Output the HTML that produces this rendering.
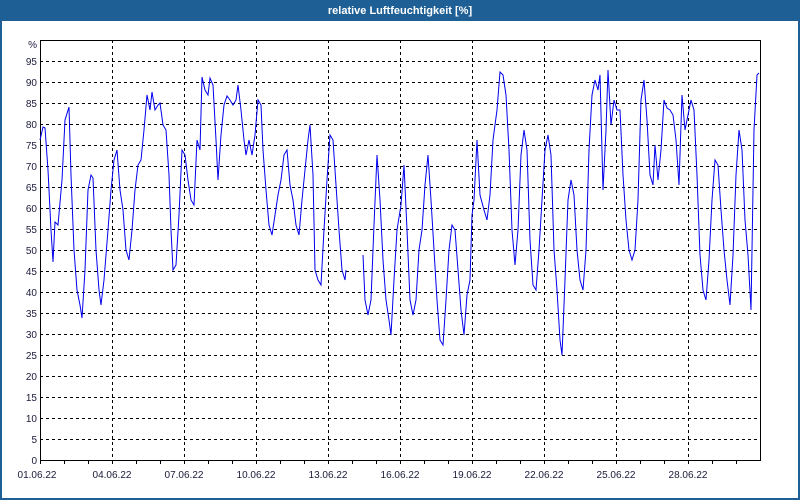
<!DOCTYPE html>
<html><head><meta charset="utf-8"><style>
html,body{margin:0;padding:0;width:800px;height:500px;overflow:hidden;background:#fff;font-family:"Liberation Sans",sans-serif}
</style></head><body>
<svg width="800" height="500" xmlns="http://www.w3.org/2000/svg" style="position:absolute;left:0;top:0">
<rect x="0" y="0" width="800" height="500" fill="#1e5f96"/>
<rect x="2" y="21" width="796" height="477" fill="#fff"/>
<text x="400" y="14" fill="#fff" font-size="11" font-weight="bold" text-anchor="middle" font-family="Liberation Sans, sans-serif">relative Luftfeuchtigkeit [%]</text>
<g stroke="#000" stroke-dasharray="3,3" stroke-width="1" shape-rendering="crispEdges">
<path d="M40 61.5H760M40 82.5H760M40 103.5H760M40 124.5H760M40 145.5H760M40 166.5H760M40 187.5H760M40 208.5H760M40 229.5H760M40 250.5H760M40 271.5H760M40 292.5H760M40 313.5H760M40 334.5H760M40 355.5H760M40 376.5H760M40 397.5H760M40 418.5H760M40 439.5H760"/>
<path d="M112.5 40V460M184.5 40V460M256.5 40V460M328.5 40V460M400.5 40V460M472.5 40V460M544.5 40V460M616.5 40V460M688.5 40V460"/>
</g>
<g stroke="#000" stroke-width="1" fill="none" shape-rendering="crispEdges">
<rect x="40.5" y="40.5" width="720" height="420"/>
<path d="M40.5 460V464M64.5 460V464M88.5 460V464M112.5 460V464M136.5 460V464M160.5 460V464M184.5 460V464M208.5 460V464M232.5 460V464M256.5 460V464M280.5 460V464M304.5 460V464M328.5 460V464M352.5 460V464M376.5 460V464M400.5 460V464M424.5 460V464M448.5 460V464M472.5 460V464M496.5 460V464M520.5 460V464M544.5 460V464M568.5 460V464M592.5 460V464M616.5 460V464M640.5 460V464M664.5 460V464M688.5 460V464M712.5 460V464M736.5 460V464"/>
</g>
<g font-size="10" fill="#1a1a3a" text-anchor="end" font-family="Liberation Sans, sans-serif">
<text x="37" y="48">%</text><text x="37" y="65">95</text><text x="37" y="86">90</text><text x="37" y="107">85</text><text x="37" y="128">80</text><text x="37" y="149">75</text><text x="37" y="170">70</text><text x="37" y="191">65</text><text x="37" y="212">60</text><text x="37" y="233">55</text><text x="37" y="254">50</text><text x="37" y="275">45</text><text x="37" y="296">40</text><text x="37" y="317">35</text><text x="37" y="338">30</text><text x="37" y="359">25</text><text x="37" y="380">20</text><text x="37" y="401">15</text><text x="37" y="422">10</text><text x="37" y="443">5</text><text x="37" y="464">0</text>
</g>
<g font-size="10" fill="#1a1a3a" text-anchor="middle" font-family="Liberation Sans, sans-serif">
<text x="37" y="478">01.06.22</text><text x="112" y="478">04.06.22</text><text x="184" y="478">07.06.22</text><text x="256" y="478">10.06.22</text><text x="328" y="478">13.06.22</text><text x="400" y="478">16.06.22</text><text x="472" y="478">19.06.22</text><text x="544" y="478">22.06.22</text><text x="616" y="478">25.06.22</text><text x="688" y="478">28.06.22</text>
</g>
<g stroke="#0000ee" stroke-width="1" fill="none">
<polyline points="40,140 43,127 45,128 48,170 51,230 53,262 55,222 58,225 62,180 65,120 69,107 71,175 74,250 77,290 80,305 82,318 85,270 88,190 91,175 93,178 96,250 99,290 101,305 104,280 108,230 111,190 114,160 117,150 120,190 123,210 126,250 129,260 132,230 135,190 138,165 141,160 144,130 147,95 150,110 152,92 155,110 158,105 160,103 163,125 166,130 169,175 171,230 173,270 176,265 179,215 182,150 185,155 188,180 191,200 194,205 197,140 200,150 202,77 205,90 208,95 210,78 213,85 216,140 218,180 221,135 224,105 227,96 230,100 233,105 236,100 238,85 241,110 244,140 246,155 249,140 252,155 255,135 258,100 261,105 263,150 266,190 269,225 272,235 275,215 278,195 281,180 284,155 287,150 290,185 293,200 296,225 299,235 302,200 305,170 308,140 310,125 313,175 315,270 318,280 321,285 324,230 327,180 330,135 333,140 336,185 339,230 342,270 345,280 346,270"/>
<polyline points="363,255 365,300 368,315 371,300 374,225 377,155 380,200 383,260 386,300 389,320 391,335 394,280 397,230 401,205 404,165 407,230 410,300 413,315 416,300 419,250 422,230 425,185 428,155 431,200 434,250 437,300 440,340 443,345 446,300 449,250 452,225 455,230 458,270 461,310 464,335 467,295 470,280 472,215 474,200 477,140 480,195 484,210 487,220 490,195 493,140 497,110 500,72 503,75 506,95 509,150 512,230 515,265 518,230 521,155 524,130 527,150 530,240 533,285 536,290 539,250 542,200 545,150 548,135 551,155 554,250 557,290 560,340 562,355 565,280 568,200 571,180 574,195 577,250 580,280 583,290 586,250 589,150 592,95 595,80 598,90 600,75 603,190 606,130 608,70 611,125 614,100 617,110 620,110 623,175 626,220 629,250 632,260 635,250 638,200 641,100 644,80 647,120 650,175 653,185 655,145 658,180 661,150 664,100 667,108 670,110 673,115 676,140 679,185 682,95 685,130 688,115 691,100 694,110 697,175 700,255 703,290 706,300 709,260 712,200 715,160 718,165 721,210 724,250 727,280 730,305 733,255 736,175 739,130 742,150 745,220 748,255 751,310 754,130 757,75 759,73"/>
</g>
</svg>
</body></html>
